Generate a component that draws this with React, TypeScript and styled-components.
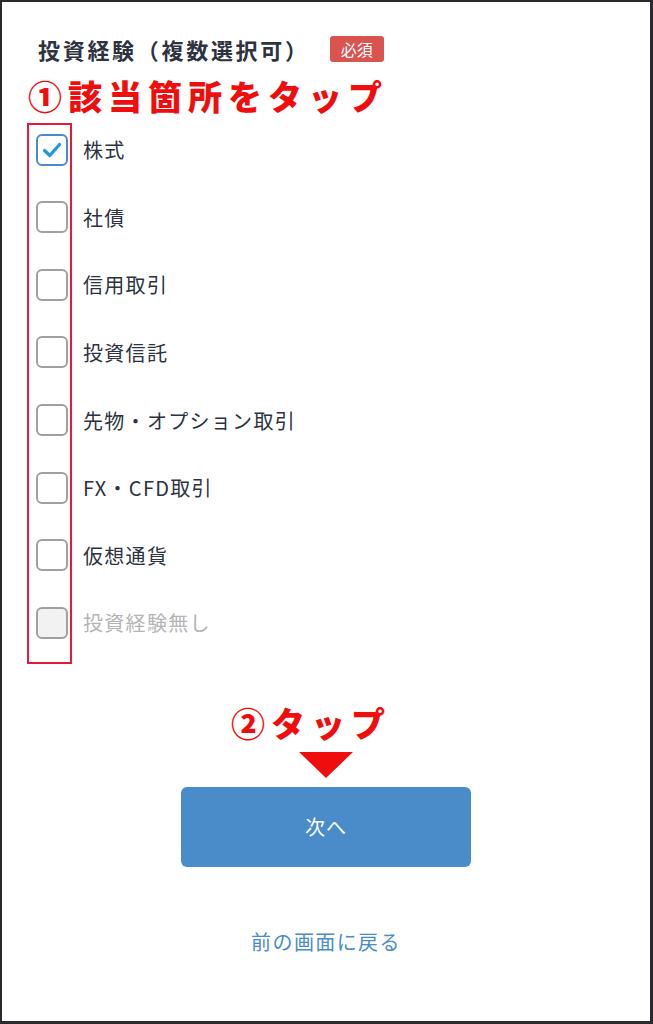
import React, { useState } from "react";
import styled, { createGlobalStyle } from "styled-components";

const GlobalStyle = createGlobalStyle`
  html, body {
    margin: 0;
    padding: 0;
    background: #ffffff;
  }
  body {
    font-family: "Noto Sans CJK JP", "Noto Sans", sans-serif;
  }
`;

const Frame = styled.div`
  width: 653px;
  height: 1024px;
  box-sizing: border-box;
  border-style: solid;
  border-color: #2b2b2f;
  border-width: 2px 3px 3px 2px;
  background: #fff;
  display: flex;
  flex-direction: column;
`;

const Header = styled.div`
  display: flex;
  align-items: center;
  gap: 20px;
  height: 26px;
  margin: 34px 0 0 36px;
`;

const Title = styled.h2`
  margin: 0;
  font-size: 22px;
  font-weight: 700;
  color: #2d3340;
  line-height: 26px;
  letter-spacing: 2.7px;
`;

const Badge = styled.span`
  display: inline-flex;
  align-items: center;
  justify-content: center;
  width: 54px;
  height: 26px;
  border-radius: 3px;
  background: #d9534f;
  color: #fff;
  font-size: 16px;
  line-height: 1;
`;

const Annotation = styled.div<{ $shift?: number }>`
  color: #f00d0d;
  font-size: 34px;
  font-weight: 900;
  letter-spacing: 6px;
  line-height: 34px;
  white-space: nowrap;
  padding-right: ${(p) => p.$shift ?? 0}px;
`;

const StepOne = styled(Annotation)`
  margin: 17px 0 0 26px;
`;

const List = styled.div`
  position: relative;
  margin: 3px 0 0 34px;
  display: flex;
  flex-direction: column;
`;

const Highlight = styled.div`
  position: absolute;
  left: -9px;
  top: 7px;
  width: 45px;
  height: 541px;
  box-sizing: border-box;
  border: 2px solid #e8173c;
  pointer-events: none;
`;

const Row = styled.label<{ $disabled?: boolean }>`
  display: flex;
  align-items: center;
  gap: 15px;
  height: 67.57px;
  cursor: ${(p) => (p.$disabled ? "default" : "pointer")};
`;

const Box = styled.span<{ $checked?: boolean; $disabled?: boolean }>`
  width: 32px;
  height: 32px;
  box-sizing: border-box;
  border: 2px solid ${(p) => (p.$checked ? "#4a8cca" : "#a0a0a0")};
  border-radius: 6px;
  background: ${(p) => (p.$disabled ? "#f2f2f2" : "#fff")};
  display: flex;
  align-items: center;
  justify-content: center;
  flex-shrink: 0;
`;

const Label = styled.span<{ $disabled?: boolean }>`
  font-size: 20px;
  color: ${(p) => (p.$disabled ? "#b4b4b4" : "#2d3340")};
  letter-spacing: 1.3px;
`;

const Footer = styled.div`
  display: flex;
  flex-direction: column;
  align-items: center;
  margin-top: 49px;
`;

const Arrow = styled.div`
  width: 0;
  height: 0;
  margin-top: 12px;
  border-left: 27px solid transparent;
  border-right: 27px solid transparent;
  border-top: 26px solid #f00d0d;
`;

const NextButton = styled.button`
  margin-top: 9px;
  width: 290px;
  height: 80px;
  border: none;
  border-radius: 6px;
  background: #4a8cca;
  color: #fff;
  font-family: inherit;
  font-size: 20px;
  letter-spacing: 1px;
  cursor: pointer;
`;

const BackLink = styled.a`
  margin-top: 60px;
  color: #4a8cca;
  font-size: 20px;
  text-decoration: none;
  letter-spacing: 1.4px;
`;

const items = [
  "株式",
  "社債",
  "信用取引",
  "投資信託",
  "先物・オプション取引",
  "FX・CFD取引",
  "仮想通貨",
  "投資経験無し",
];

const Check = () => (
  <svg width="22" height="22" viewBox="0 0 22 22" fill="none">
    <path
      d="M3.5 11.5 L8.8 16.5 L18.5 5.5"
      stroke="#1a9ae0"
      strokeWidth="3.2"
      strokeLinecap="round"
      strokeLinejoin="round"
    />
  </svg>
);

export default function App() {
  const [checked, setChecked] = useState<string[]>(["株式"]);

  const toggle = (name: string) => {
    setChecked((prev) =>
      prev.includes(name) ? prev.filter((n) => n !== name) : [...prev, name]
    );
  };

  return (
    <>
      <GlobalStyle />
      <Frame>
        <Header>
          <Title>投資経験（複数選択可）</Title>
          <Badge>必須</Badge>
        </Header>
        <StepOne>①該当箇所をタップ</StepOne>

        <List>
          {items.map((name) => {
            const disabled = name === "投資経験無し";
            const isChecked = checked.includes(name);
            return (
              <Row
                key={name}
                $disabled={disabled}
                onClick={() => !disabled && toggle(name)}
              >
                <Box $checked={isChecked} $disabled={disabled}>
                  {isChecked && <Check />}
                </Box>
                <Label $disabled={disabled}>{name}</Label>
              </Row>
            );
          })}
          <Highlight />
        </List>

        <Footer>
          <Annotation $shift={30}>②タップ</Annotation>
          <Arrow />
          <NextButton>次へ</NextButton>
          <BackLink href="#">前の画面に戻る</BackLink>
        </Footer>
      </Frame>
    </>
  );
}
